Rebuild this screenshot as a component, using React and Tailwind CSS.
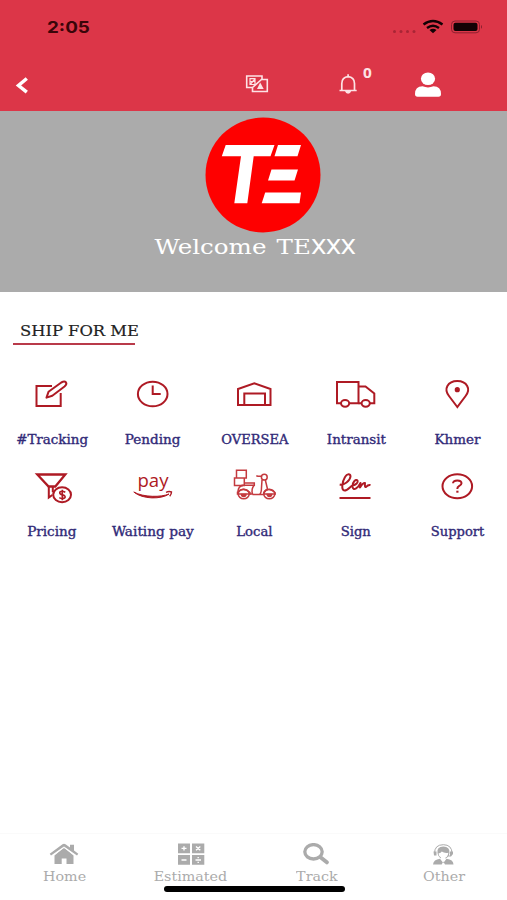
import React from 'react';

const Icon = ({ children }) => (
    <svg
        viewBox="0 0 48 40"
        className="w-12 h-10 overflow-visible text-[#ae1a24]"
        fill="none"
        stroke="currentColor"
        strokeWidth="2"
    >
        {children}
    </svg>
);

const services = [
    {
        label: '#Tracking',
        className: 'scale-x-[1.12]',
        icon: (
            <Icon>
                <path d="M24 12H8.500V32H32.700V19" />
                <path d="M18.500 23.600L20.500 17.800L33.300 8.500Q36.500 6.800 37.900 8.300Q39.300 10 36.500 12.500L24.300 21.700z" strokeLinejoin="round" />
            </Icon>
        )
    },
    {
        label: 'Pending',
        className: 'scale-x-[1.13]',
        icon: (
            <Icon>
                <ellipse cx="23.700" cy="20" rx="14.800" ry="12.300" />
                <path d="M23.700 11.500V20H31.700" />
            </Icon>
        )
    },
    {
        label: 'OVERSEA',
        className: 'scale-x-[1.09]',
        icon: (
            <Icon>
                <path d="M8 31V15L24.300 9.300L40.500 15V31z" />
                <path d="M14.300 31V19.500H35V31" />
            </Icon>
        )
    },
    {
        label: 'Intransit',
        className: 'scale-x-[1.12]',
        icon: (
            <Icon>
                <path d="M9 29.300H5V8H26.500V29.300H17.300" />
                <path d="M26.500 12.500H33.500L42.300 19.500V29.300H38M29.500 29.300H26.500" />
                <ellipse cx="13.100" cy="29.300" rx="4.100" ry="3.400" />
                <ellipse cx="33.700" cy="29.300" rx="4.100" ry="3.400" />
            </Icon>
        )
    },
    {
        label: 'Khmer',
        className: 'scale-x-[1.12]',
        icon: (
            <Icon>
                <path d="M24.300 33L16 22C13 18 13 14.500 14.400 12C18 5.300 30.600 5.300 34.200 12C35.600 14.500 35.600 18 32.600 22z" />
                <circle cx="24.300" cy="15.700" r="1.600" fill="currentColor" />
            </Icon>
        )
    },
    {
        label: 'Pricing',
        className: 'scale-x-[1.13]',
        icon: (
            <Icon>
                <g transform="translate(-.7 0)">
                    <path d="M10 8.500H38L28 20.500H21.300z" strokeWidth="2.300" />
                    <path d="M21.500 20V31.500L25 29M25.500 20V26" />
                    <ellipse cx="34.800" cy="28.800" rx="8.900" ry="7.500" />
                    <path d="M38 26.300Q34.500 24.300 32.500 26.200Q32 28.300 35.200 28.900Q38.500 29.700 37.700 31.600Q35.300 33.600 32 31.600M35 23.700V34.300" strokeWidth="1.600" />
                </g>
            </Icon>
        )
    },
    {
        label: 'Waiting pay',
        className: 'scale-x-[1.14]',
        icon: (
            <Icon>
                <text
                    x="8.500"
                    y="21.300"
                    textLength="31"
                    lengthAdjust="spacingAndGlyphs"
                    fill="currentColor"
                    stroke="none"
                    className="font-['Open_Sans',sans-serif] text-[17.5px]"
                >
                    pay
                </text>
                <path d="M4.800 26C13.500 33.500 32.500 33.500 40 28C32.500 31.300 14.500 31.500 4.800 26z" fill="currentColor" strokeWidth="1" />
                <path d="M37 26.300Q40 25 42.500 26Q42.500 28.300 40.700 30.300" strokeWidth="1.400" />
            </Icon>
        )
    },
    {
        label: 'Local',
        className: 'scale-x-[1.1]',
        icon: (
            <Icon>
                <g strokeWidth="1.500" className="text-[#c43a3f]" stroke="currentColor">
                    <path d="M6.500 4.200H16.300V12H6.500zM4.500 12H14.300V19.500H4.500z" />
                    <path d="M14.500 17H24.300V19.300H11.500M8 25Q8.500 20 13 19.500M24 19.500Q21 23 22.500 28H19.500" />
                    <path d="M22.500 28.500H29.500Q31.500 27 31.500 21.500L32 14M35.300 14L37.500 23Q34 25 33.500 28.500H29.500" />
                    <path d="M26.300 9.700Q29 10.700 32 10M7.500 26Q13.500 20.500 20 26.500V28H7.500zM33.500 27Q38 20.500 45 26.500L45.200 28H33.500" />
                    <ellipse cx="34.300" cy="11.200" rx="2.900" ry="2.900" />
                    <ellipse cx="13.700" cy="28" rx="5.500" ry="4.800" />
                    <ellipse cx="39.300" cy="28" rx="5.500" ry="4.800" />
                    <path d="M11.500 28.500a2.200 2 0 0 0 4.400 0zM37.200 28.500a2.200 2 0 0 0 4.400 0z" fill="currentColor" />
                </g>
            </Icon>
        )
    },
    {
        label: 'Sign',
        className: 'scale-x-[1.1]',
        icon: (
            <Icon>
                <path
                    d="M7.700 18.500C12 19.500 18 15 18.500 10.500C18.500 7.300 15 7.300 13 11C10 16 9 24.500 12.500 24.500C16 24.500 18.500 20 20.500 19.500C24 19 26.500 16.500 25.500 14.500C24 12.500 20 16.500 20.500 20.500C21 25.500 26 22.500 28.500 17L28 21.500Q31 16.500 33 17Q32.500 21.500 34 21Q36 18.500 38.500 19"
                    strokeLinejoin="round"
                />
                <path d="M7.500 32H38.500" />
            </Icon>
        )
    },
    {
        label: 'Support',
        className: 'scale-x-[1.09]',
        icon: (
            <Icon>
                <ellipse cx="24.300" cy="20.300" rx="14.800" ry="12" />
                <path d="M20 17.300Q20.200 14.400 24.300 14.400Q28.500 14.400 28.500 17.300Q28.500 19 26 20.200Q24.300 21.200 24.300 23" />
                <path d="M23.300 25.700H25.500" />
            </Icon>
        )
    }
];

const tabs = [
    {
        label: 'Home',
        icon: (
            <svg viewBox="0 0 30 22" className="w-[30px] h-[22px]" fill="currentColor">
                <path d="M15 4.500L24.500 12.500V21H17.500V15.500H12.700V21H5.500V12.500z" />
                <path d="M.7 10.700L13.500 1.200Q15 .3 16.500 1.200L21 4.500V1.700H25V7.500L29.300 10.700L28 12.500L15 3.500L2 12.500z" />
                <path d="M3.500 12.700L15 4.500L26.500 12.700" fill="none" stroke="#fff" strokeWidth=".9" />
            </svg>
        )
    },
    {
        label: 'Estimated',
        icon: (
            <svg viewBox="0 0 30 22" className="w-[30px] h-[22px]" fill="currentColor">
                <path d="M2 .5H14V10.300H2zM16 .5H28.300V10.300H16zM2 12H14V21.800H2zM16 12H28.300V21.800H16z" />
                <path d="M5.500 5.400H10.500M8 3.200V7.600M20 3.500L24.300 7.300M24.300 3.500L20 7.300M5.500 17H10.500M19.500 17H25M22.200 14V15.300M22.200 18.700V20" stroke="#fff" strokeWidth="1.400" />
            </svg>
        )
    },
    {
        label: 'Track',
        icon: (
            <svg viewBox="0 0 30 22" className="w-[30px] h-[22px]" fill="none" stroke="currentColor">
                <ellipse cx="11.500" cy="8.800" rx="8.700" ry="7.200" strokeWidth="3.300" />
                <path d="M18.500 14.300L24.800 19.300" strokeWidth="4" strokeLinecap="round" />
            </svg>
        )
    },
    {
        label: 'Other',
        icon: (
            <svg viewBox="0 0 30 22" className="w-[30px] h-[22px]" fill="currentColor">
                <path d="M5.500 10.500Q5.500 1.700 14.300 1.700Q23 1.700 23 10.500" fill="none" stroke="currentColor" strokeWidth="1" />
                <path d="M8.500 10Q7.500 3.500 14.300 3.500Q21 3.500 20.500 10Q20 15 14.500 16.300Q9 15 8.500 10zM4.500 8.500H7.500V12.500H5zM21 8.500H24V11L22 13.500H17V12.500H21z" />
                <path d="M9.500 10.500Q12 10 12.800 8.500Q15.500 10.500 19.300 9.700Q19 13.500 16.500 14.500V17L14.300 19.500L12 17V14.500Q9.700 13.500 9.500 10.500z" fill="#fff" />
                <path d="M4 21.500Q4.500 16.500 11 15.700L14.300 20L17.500 15.700Q24.300 16.500 24.500 21.500H16L14.300 18.500L12.700 21.500z" />
            </svg>
        )
    }
];

const StatusBar = () => (
    <div className="h-14 flex items-start justify-between pl-[47px] pr-[25px] pt-[17px]">
        <span className="origin-left scale-x-[1.14] font-['Inter',sans-serif] text-[16.5px] leading-[21px] font-bold text-[#3a0509]">
            2:05
        </span>
        <svg viewBox="0 0 90 20" className="w-[90px] h-5" fill="#120205">
            <g fill="#a92535">
                <circle cx="2.500" cy="14.500" r="1.500" />
                <circle cx="9" cy="14.500" r="1.500" />
                <circle cx="15.500" cy="14.500" r="1.500" />
                <circle cx="22" cy="14.500" r="1.500" />
            </g>
            <g fill="none" stroke="#120205" strokeWidth="2.400">
                <path d="M31.500 7.500Q41 .5 50.500 7.500" />
                <path d="M35 11Q41 6.500 47 11" />
            </g>
            <path d="M37.500 13Q41 10.500 44.500 13L41 16.200z" />
            <rect x="59.500" y="4" width="28" height="11.800" rx="3.500" fill="none" stroke="#8e2130" />
            <rect x="61.500" y="5.700" width="24" height="8.300" rx="2" />
            <path d="M89 8Q91.500 9.900 89 11.800z" fill="#8e2130" />
        </svg>
    </div>
);

const Header = () => (
    <header className="h-[111px] bg-[#dc3648]">
        <StatusBar />
        <div className="h-[55px] flex items-start text-white">
            <svg viewBox="0 0 16 20" className="ml-[14px] mt-[19px] w-4 h-5" fill="none" stroke="currentColor" strokeWidth="3.500">
                <path d="M12.800 3.500L4.500 10.500L12.800 17.200" />
            </svg>

            {/* Language */}
            <svg viewBox="0 0 24 20" className="ml-[215px] mt-[18px] w-6 h-5 text-[#fde3e5]" fill="none" stroke="currentColor" strokeWidth="1.600">
                <path d="M7 13.500H1.700V2H17V5.500M17 5.500H22.300V17.500H7.500V13.500L16.500 5.500z" />
                <path d="M5 4.700H10V10.500H5zM5 7.500H10M5 10.500L10 5" strokeWidth="1.200" />
                <path d="M12 15L15.200 8.500L18.700 15z" fill="currentColor" stroke="none" />
            </svg>

            {/* Notifications */}
            <div className="ml-[69px] mt-[16px] flex">
                <svg viewBox="0 0 20 22" className="mt-px w-5 h-[22px] text-[#fde3e5]" fill="none" stroke="currentColor" strokeWidth="1.700">
                    <path d="M1.500 17.500H18.700M3.800 17.500V10.500Q4 4 10.100 3.600Q16.300 4 16.500 10.500V17.500M10.100 1.300V4" />
                    <path d="M7 18H13.200Q12.500 20.700 10.100 20.700Q7.700 20.700 7 18z" fill="currentColor" stroke="none" />
                </svg>
                <span className="-mt-[8px] ml-[5px] origin-left scale-x-[1.1] font-['Open_Sans',sans-serif] text-[14px] leading-[18px] font-bold text-[#fde3e5]">
                    0
                </span>
            </div>

            <svg viewBox="0 0 28 26" className="ml-[43px] mt-[16px] w-7 h-[26px]" fill="currentColor">
                <ellipse cx="14" cy="6.800" rx="7.100" ry="6.300" />
                <path d="M1 22Q1 14.500 8.500 14.300Q14 16.500 19.500 14.300Q27 14.500 27 22Q27 24.700 24.500 24.700H3.500Q1 24.700 1 22z" />
            </svg>
        </div>
    </header>
);

const Logo = () => (
    <svg viewBox="0 0 116 116" className="ml-[18px] w-[116px] h-[116px]">
        <circle cx="58" cy="58" r="57.500" fill="#fe0000" />
        <g fill="#fff">
            <path d="M20.700 28H69.500L65.500 39.300H48.700L42.300 86.300H29.300L36 39.300H16.800z" />
            <path d="M73 28H96L92.500 39.300H69.500z" />
            <path d="M66.500 52.500H93L89.500 63.500H63z" />
            <path d="M60.200 75.500H96L94.500 86.300H56.700z" />
        </g>
    </svg>
);

export default function App() {
    return (
        <div className="w-full h-[900px] overflow-hidden bg-white flex flex-col font-['DejaVu_Serif',serif]">
            <Header />

            {/* Welcome banner */}
            <section className="h-[181px] bg-[#ababab] flex flex-col items-center pt-[6px]">
                <Logo />
                <h1 className="-mt-px ml-[3px] scale-x-[1.17] text-[21px] leading-[30px] [word-spacing:2px] text-white whitespace-nowrap">
                    Welcome TE<span className="font-['Roboto',sans-serif] text-[21px] -tracking-[0.5px]">XXX</span>
                </h1>
            </section>

            {/* Services */}
            <section className="flex-1">
                <h2 className="mt-[29px] ml-[13px] w-[122px] h-[24px] border-b-2 border-[#b93a4a] pl-[7px] text-[15px] leading-[20px] whitespace-nowrap text-[#222] [-webkit-text-stroke:0.2px_#222]">
                    <span className="inline-block origin-left scale-x-[1.09]">SHIP FOR ME</span>
                </h2>
                <div className="mt-[29px] ml-px -mr-px grid grid-cols-5 gap-y-[16px]">
                    {services.map((item) => (
                        <div key={item.label} className="h-[76px] flex flex-col items-center">
                            {item.icon}
                            <span
                                className={`mt-[17px] text-[12px] leading-[18px] whitespace-nowrap text-[#312a78] [-webkit-text-stroke:0.35px_#312a78] ${item.className}`}
                            >
                                {item.label}
                            </span>
                        </div>
                    ))}
                </div>
            </section>

            {/* Bottom tabs */}
            <nav className="relative h-[67px] border-t border-[#fafafa] grid grid-cols-4 pt-[9px] pl-px text-[#ababab]">
                {tabs.map((tab) => (
                    <div key={tab.label} className="flex flex-col items-center">
                        {tab.icon}
                        <span className="mt-[3px] scale-x-[1.1] text-[13px] leading-[18px]">{tab.label}</span>
                    </div>
                ))}
                <div className="absolute left-[164px] top-[52px] w-[181px] h-[6px] rounded-full bg-black" />
            </nav>
        </div>
    );
}
